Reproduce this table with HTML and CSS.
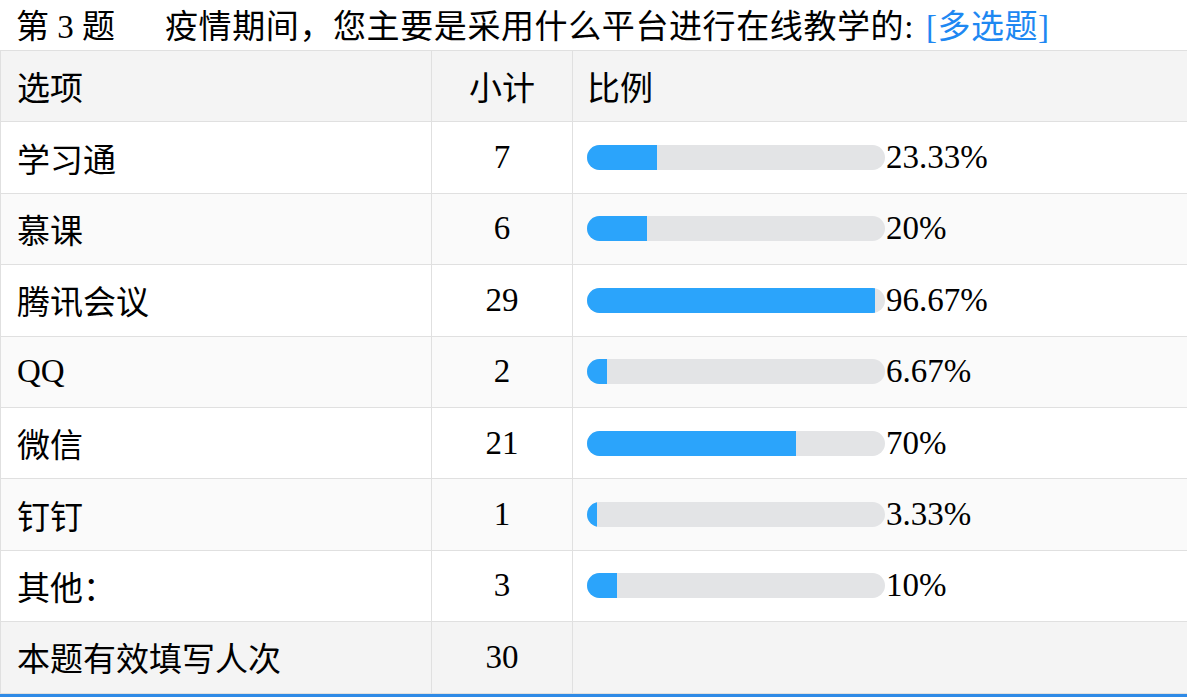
FILE: index.html
```html
<!DOCTYPE html>
<html lang="zh-CN">
<head>
<meta charset="utf-8">
<title>第3题</title>
<link rel="stylesheet" href="styles.css">
</head>
<body>
<div class="title"><span class="qno">第 3 题</span><span class="qtext">疫情期间，您主要是采用什么平台进行在线教学的:</span><span class="qtype">[多选题]</span></div>
<div class="grid">
  <div class="cell head">选项</div>
  <div class="cell head num">小计</div>
  <div class="cell head">比例</div>

  <div class="cell">学习通</div>
  <div class="cell num">7</div>
  <div class="cell ratio"><div class="bar"><div class="fill" style="width:23.33%"></div></div><span class="pct">23.33%</span></div>

  <div class="cell even">慕课</div>
  <div class="cell num even">6</div>
  <div class="cell ratio even"><div class="bar"><div class="fill" style="width:20%"></div></div><span class="pct">20%</span></div>

  <div class="cell">腾讯会议</div>
  <div class="cell num">29</div>
  <div class="cell ratio"><div class="bar"><div class="fill" style="width:96.67%"></div></div><span class="pct">96.67%</span></div>

  <div class="cell even">QQ</div>
  <div class="cell num even">2</div>
  <div class="cell ratio even"><div class="bar"><div class="fill" style="width:6.67%"></div></div><span class="pct">6.67%</span></div>

  <div class="cell">微信</div>
  <div class="cell num">21</div>
  <div class="cell ratio"><div class="bar"><div class="fill" style="width:70%"></div></div><span class="pct">70%</span></div>

  <div class="cell even">钉钉</div>
  <div class="cell num even">1</div>
  <div class="cell ratio even"><div class="bar"><div class="fill" style="width:3.33%"></div></div><span class="pct">3.33%</span></div>

  <div class="cell">其他：</div>
  <div class="cell num">3</div>
  <div class="cell ratio"><div class="bar"><div class="fill" style="width:10%"></div></div><span class="pct">10%</span></div>

  <div class="cell total">本题有效填写人次</div>
  <div class="cell num total">30</div>
  <div class="cell total"></div>
</div>
<div class="bottom-bar"></div>
</body>
</html>
```
FILE: styles.css
```css
html, body {
  margin: 0;
  padding: 0;
  background: #fff;
  overflow: hidden;
}
body {
  font-family: "Liberation Serif", "Noto Sans CJK SC", serif;
  font-size: 33px;
  color: #000;
  width: 1187px;
  height: 697px;
}
.title {
  height: 50px;
  line-height: 54px;
  padding-left: 16px;
  white-space: nowrap;
  box-sizing: border-box;
}
.qtext {
  margin-left: 50px;
  letter-spacing: 0.6px;
}
.qtype {
  color: #1e88f2;
  margin-left: 12px;
  letter-spacing: 0.5px;
}
.grid {
  display: grid;
  grid-template-columns: 431px 141px 1fr;
  grid-auto-rows: 71.4px;
  width: 1189px;
  border-top: 1px solid #e0e0e0;
  border-left: 1px solid #e0e0e0;
}
.cell {
  box-sizing: border-box;
  border-right: 1px solid #e0e0e0;
  border-bottom: 1px solid #e0e0e0;
  display: flex;
  align-items: center;
  padding-left: 16px;
  white-space: nowrap;
  background: #fff;
}
.head, .total {
  background: #f4f4f4;
}
.even {
  background: #fafafa;
}
.num {
  justify-content: center;
  padding-left: 0;
}
.grid > .cell:nth-child(3n) {
  padding-left: 14px;
}
.bar {
  width: 298px;
  height: 25px;
  border-radius: 12.5px;
  background: #e3e4e6;
  overflow: hidden;
  flex: none;
}
.fill {
  height: 100%;
  background: #2ba4fb;
}
.pct {
  margin-left: 1px;
}
.bottom-bar {
  height: 6px;
  background: #2f8ae6;
}
```
